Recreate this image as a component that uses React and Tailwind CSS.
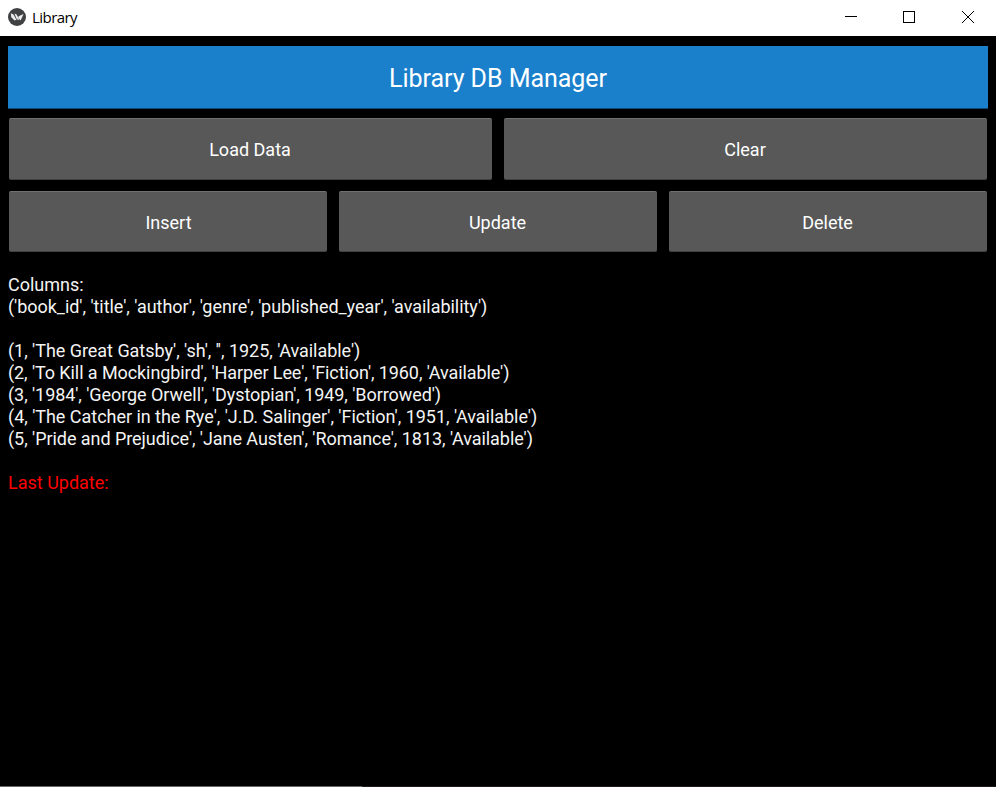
function Button({ children, className }) {
  return (
    <button className={`flex-1 rounded-[2px] bg-[#585858] border-t border-t-[#707070] border-b border-b-[#404040] text-[18px] text-white text-center ${className}`}>
      {children}
    </button>
  );
}

const rows = [
  ["Columns:", "tracking-normal"],
  ["('book_id', 'title', 'author', 'genre', 'published_year', 'availability')", "tracking-[-0.04px]"],
  ["", "tracking-normal"],
  ["(1, 'The Great Gatsby', 'sh', '', 1925, 'Available')", "tracking-[-0.04px]"],
  ["(2, 'To Kill a Mockingbird', 'Harper Lee', 'Fiction', 1960, 'Available')", "tracking-[-0.085px]"],
  ["(3, '1984', 'George Orwell', 'Dystopian', 1949, 'Borrowed')", "tracking-[-0.07px]"],
  ["(4, 'The Catcher in the Rye', 'J.D. Salinger', 'Fiction', 1951, 'Available')", "tracking-[-0.03px]"],
  ["(5, 'Pride and Prejudice', 'Jane Austen', 'Romance', 1813, 'Available')", "tracking-[-0.055px]"],
  ["", "tracking-normal"],
];

export default function App() {
  return (
    <div className="w-[996px] h-[787px] bg-black flex flex-col overflow-hidden font-['Roboto',sans-serif]">
      <header className="h-9 shrink-0 bg-white flex items-center pl-2">
        <svg width="18" height="18" viewBox="0 0 18 18" className="-mt-[2px]">
          <circle cx="9" cy="9" r="9" fill="#3f4143" />
          <path d="M2.8 5.2L5.4 6.4L8.4 11.8L6.6 12.4L3.3 9.2ZM6.4 5.4L8.6 6.4L10.2 9.6L9.2 12.2ZM10.6 8.2L15.6 6L12.6 12.4L11.4 11L9.9 12.4Z" fill="#eee" />
        </svg>
        <span className="ml-1.5 -mt-[2px] flex-1 text-[15px] tracking-[-0.55px] text-black font-['Open_Sans',sans-serif]">Library</span>
        <svg width="160" height="36" viewBox="0 0 160 36" fill="none" stroke="#000" shapeRendering="crispEdges">
          <path d="M9 16.5H21" />
          <rect x="67.5" y="11.5" width="11" height="11" />
          <path d="M126 11L138 23M138 11L126 23" shapeRendering="auto" />
        </svg>
      </header>
      <main className="pt-[10px] px-2 grow">
        <h1 className="h-[63px] bg-[#1a80cc] border-b border-[#0f4a77] text-white text-[25px] tracking-[-0.04px] leading-[66px] text-center">Library DB Manager</h1>
        <div className="mt-[9px] h-[62px] px-px flex gap-3">
          <Button className="pr-px pt-px">Load Data</Button>
          <Button className="pr-px pt-px">Clear</Button>
        </div>
        <div className="mt-[11px] h-[61px] px-px flex gap-3">
          <Button className="pl-px pt-[2px]">Insert</Button>
          <Button className="pr-px pt-[2px]">Update</Button>
          <Button className="pr-px pt-[2px]">Delete</Button>
        </div>
        <div className="mt-[22px] text-[18px] leading-[22px] text-[#f4f4f4] whitespace-pre">
          {rows.map(([text, tracking], i) => (
            <p key={i} className={`h-[22px] ${tracking}`}>{text}</p>
          ))}
          <p className="text-[#f00]">Last Update:</p>
        </div>
      </main>
      <div className="h-px shrink-0 flex">
        <div className="w-[362px] bg-[#696969]" />
        <div className="grow bg-[#211a1d]" />
      </div>
    </div>
  );
}
